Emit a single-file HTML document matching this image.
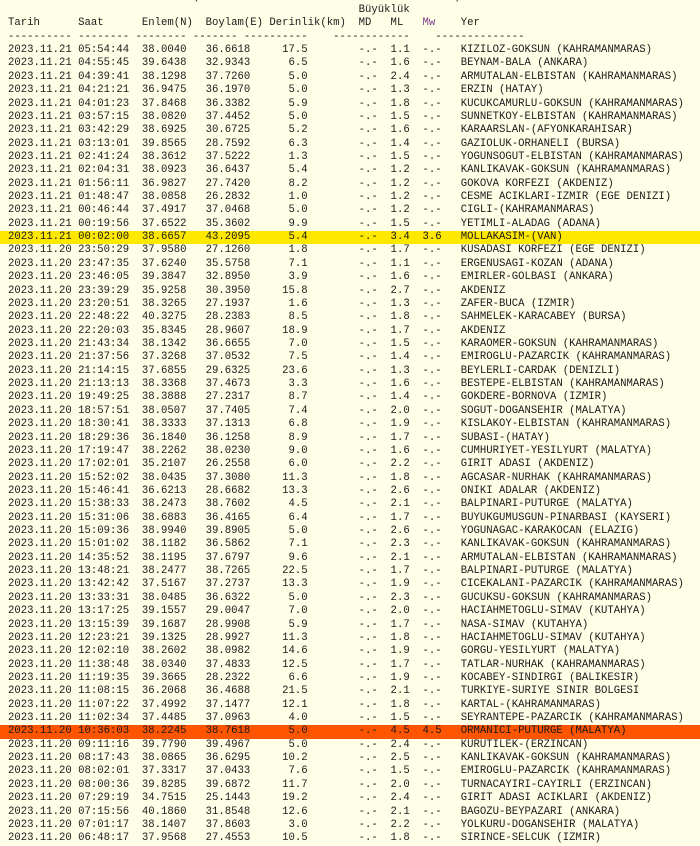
<!DOCTYPE html>
<html><head><meta charset="utf-8"><style>
html,body{margin:0;padding:0;background:#FFFFE8;width:700px;height:843px;overflow:hidden}
.p{position:absolute;left:8px;top:4px;font-family:"Liberation Mono","DejaVu Sans Mono",monospace;font-size:10.63px;line-height:13.36px;color:#1a1a1a;white-space:pre}
.l{height:13.36px;position:relative}
.y{background:#FFE800;margin-left:-8px;padding-left:8px;width:700px}
.o{background:#FF5500;margin-left:-8px;padding-left:8px;width:700px}
.mw{color:#7a3c8c}
.top{position:absolute;left:8px;top:-9px;font-family:"Liberation Mono",monospace;font-size:10.63px;color:#222;white-space:pre}
</style></head><body>
<div class="top">                             (                                        )</div>
<div class="p"><div class="l">                                                       Büyüklük</div><div class="l">Tarih      Saat      Enlem(N)  Boylam(E) Derinlik(km)  MD   ML   <span class="mw">Mw</span>    Yer</div><div class="l">---------- -------- -------- ------- ----------    ------------    --------------</div><div class="l">2023.11.21 05:54:44  38.0040   36.6618     17.5        -.-  1.1  -.-   KIZILOZ-GOKSUN (KAHRAMANMARAS)</div><div class="l">2023.11.21 04:55:45  39.6438   32.9343      6.5        -.-  1.6  -.-   BEYNAM-BALA (ANKARA)</div><div class="l">2023.11.21 04:39:41  38.1298   37.7260      5.0        -.-  2.4  -.-   ARMUTALAN-ELBISTAN (KAHRAMANMARAS)</div><div class="l">2023.11.21 04:21:21  36.9475   36.1970      5.0        -.-  1.3  -.-   ERZIN (HATAY)</div><div class="l">2023.11.21 04:01:23  37.8468   36.3382      5.9        -.-  1.8  -.-   KUCUKCAMURLU-GOKSUN (KAHRAMANMARAS)</div><div class="l">2023.11.21 03:57:15  38.0820   37.4452      5.0        -.-  1.5  -.-   SUNNETKOY-ELBISTAN (KAHRAMANMARAS)</div><div class="l">2023.11.21 03:42:29  38.6925   30.6725      5.2        -.-  1.6  -.-   KARAARSLAN-(AFYONKARAHISAR)</div><div class="l">2023.11.21 03:13:01  39.8565   28.7592      6.3        -.-  1.4  -.-   GAZIOLUK-ORHANELI (BURSA)</div><div class="l">2023.11.21 02:41:24  38.3612   37.5222      1.3        -.-  1.5  -.-   YOGUNSOGUT-ELBISTAN (KAHRAMANMARAS)</div><div class="l">2023.11.21 02:04:31  38.0923   36.6437      5.4        -.-  1.2  -.-   KANLIKAVAK-GOKSUN (KAHRAMANMARAS)</div><div class="l">2023.11.21 01:56:11  36.9827   27.7420      8.2        -.-  1.2  -.-   GOKOVA KORFEZI (AKDENIZ)</div><div class="l">2023.11.21 01:48:47  38.0858   26.2832      1.0        -.-  1.2  -.-   CESME ACIKLARI-IZMIR (EGE DENIZI)</div><div class="l">2023.11.21 00:46:44  37.4917   37.0468      5.0        -.-  1.2  -.-   CIGLI-(KAHRAMANMARAS)</div><div class="l">2023.11.21 00:19:56  37.6522   35.3602      9.9        -.-  1.5  -.-   YETIMLI-ALADAG (ADANA)</div><div class="l y">2023.11.21 00:02:00  38.6657   43.2095      5.4        -.-  3.4  3.6   MOLLAKASIM-(VAN)</div><div class="l">2023.11.20 23:50:29  37.9580   27.1260      1.8        -.-  1.7  -.-   KUSADASI KORFEZI (EGE DENIZI)</div><div class="l">2023.11.20 23:47:35  37.6240   35.5758      7.1        -.-  1.1  -.-   ERGENUSAGI-KOZAN (ADANA)</div><div class="l">2023.11.20 23:46:05  39.3847   32.8950      3.9        -.-  1.6  -.-   EMIRLER-GOLBASI (ANKARA)</div><div class="l">2023.11.20 23:39:29  35.9258   30.3950     15.8        -.-  2.7  -.-   AKDENIZ</div><div class="l">2023.11.20 23:20:51  38.3265   27.1937      1.6        -.-  1.3  -.-   ZAFER-BUCA (IZMIR)</div><div class="l">2023.11.20 22:48:22  40.3275   28.2383      8.5        -.-  1.8  -.-   SAHMELEK-KARACABEY (BURSA)</div><div class="l">2023.11.20 22:20:03  35.8345   28.9607     18.9        -.-  1.7  -.-   AKDENIZ</div><div class="l">2023.11.20 21:43:34  38.1342   36.6655      7.0        -.-  1.5  -.-   KARAOMER-GOKSUN (KAHRAMANMARAS)</div><div class="l">2023.11.20 21:37:56  37.3268   37.0532      7.5        -.-  1.4  -.-   EMIROGLU-PAZARCIK (KAHRAMANMARAS)</div><div class="l">2023.11.20 21:14:15  37.6855   29.6325     23.6        -.-  1.3  -.-   BEYLERLI-CARDAK (DENIZLI)</div><div class="l">2023.11.20 21:13:13  38.3368   37.4673      3.3        -.-  1.6  -.-   BESTEPE-ELBISTAN (KAHRAMANMARAS)</div><div class="l">2023.11.20 19:49:25  38.3888   27.2317      8.7        -.-  1.4  -.-   GOKDERE-BORNOVA (IZMIR)</div><div class="l">2023.11.20 18:57:51  38.0507   37.7405      7.4        -.-  2.0  -.-   SOGUT-DOGANSEHIR (MALATYA)</div><div class="l">2023.11.20 18:30:41  38.3333   37.1313      6.8        -.-  1.9  -.-   KISLAKOY-ELBISTAN (KAHRAMANMARAS)</div><div class="l">2023.11.20 18:29:36  36.1840   36.1258      8.9        -.-  1.7  -.-   SUBASI-(HATAY)</div><div class="l">2023.11.20 17:19:47  38.2262   38.0230      9.0        -.-  1.6  -.-   CUMHURIYET-YESILYURT (MALATYA)</div><div class="l">2023.11.20 17:02:01  35.2107   26.2558      6.0        -.-  2.2  -.-   GIRIT ADASI (AKDENIZ)</div><div class="l">2023.11.20 15:52:02  38.0435   37.3080     11.3        -.-  1.8  -.-   AGCASAR-NURHAK (KAHRAMANMARAS)</div><div class="l">2023.11.20 15:46:41  36.6213   28.6682     13.3        -.-  2.6  -.-   ONIKI ADALAR (AKDENIZ)</div><div class="l">2023.11.20 15:38:33  38.2473   38.7602      4.5        -.-  2.1  -.-   BALPINARI-PUTURGE (MALATYA)</div><div class="l">2023.11.20 15:31:06  38.6883   36.4165      6.4        -.-  1.7  -.-   BUYUKGUMUSGUN-PINARBASI (KAYSERI)</div><div class="l">2023.11.20 15:09:36  38.9940   39.8905      5.0        -.-  2.6  -.-   YOGUNAGAC-KARAKOCAN (ELAZIG)</div><div class="l">2023.11.20 15:01:02  38.1182   36.5862      7.1        -.-  2.3  -.-   KANLIKAVAK-GOKSUN (KAHRAMANMARAS)</div><div class="l">2023.11.20 14:35:52  38.1195   37.6797      9.6        -.-  2.1  -.-   ARMUTALAN-ELBISTAN (KAHRAMANMARAS)</div><div class="l">2023.11.20 13:48:21  38.2477   38.7265     22.5        -.-  1.7  -.-   BALPINARI-PUTURGE (MALATYA)</div><div class="l">2023.11.20 13:42:42  37.5167   37.2737     13.3        -.-  1.9  -.-   CICEKALANI-PAZARCIK (KAHRAMANMARAS)</div><div class="l">2023.11.20 13:33:31  38.0485   36.6322      5.0        -.-  2.3  -.-   GUCUKSU-GOKSUN (KAHRAMANMARAS)</div><div class="l">2023.11.20 13:17:25  39.1557   29.0047      7.0        -.-  2.0  -.-   HACIAHMETOGLU-SIMAV (KUTAHYA)</div><div class="l">2023.11.20 13:15:39  39.1687   28.9908      5.9        -.-  1.7  -.-   NASA-SIMAV (KUTAHYA)</div><div class="l">2023.11.20 12:23:21  39.1325   28.9927     11.3        -.-  1.8  -.-   HACIAHMETOGLU-SIMAV (KUTAHYA)</div><div class="l">2023.11.20 12:02:10  38.2602   38.0982     14.6        -.-  1.9  -.-   GORGU-YESILYURT (MALATYA)</div><div class="l">2023.11.20 11:38:48  38.0340   37.4833     12.5        -.-  1.7  -.-   TATLAR-NURHAK (KAHRAMANMARAS)</div><div class="l">2023.11.20 11:19:35  39.3665   28.2322      6.6        -.-  1.9  -.-   KOCABEY-SINDIRGI (BALIKESIR)</div><div class="l">2023.11.20 11:08:15  36.2068   36.4688     21.5        -.-  2.1  -.-   TURKIYE-SURIYE SINIR BOLGESI</div><div class="l">2023.11.20 11:07:22  37.4992   37.1477     12.1        -.-  1.8  -.-   KARTAL-(KAHRAMANMARAS)</div><div class="l">2023.11.20 11:02:34  37.4485   37.0963      4.0        -.-  1.5  -.-   SEYRANTEPE-PAZARCIK (KAHRAMANMARAS)</div><div class="l o">2023.11.20 10:36:03  38.2245   38.7618      5.0        -.-  4.5  4.5   ORMANICI-PUTURGE (MALATYA)</div><div class="l">2023.11.20 09:11:16  39.7790   39.4967      5.0        -.-  2.4  -.-   KURUTILEK-(ERZINCAN)</div><div class="l">2023.11.20 08:17:43  38.0865   36.6295     10.2        -.-  2.5  -.-   KANLIKAVAK-GOKSUN (KAHRAMANMARAS)</div><div class="l">2023.11.20 08:02:01  37.3317   37.0433      7.6        -.-  1.5  -.-   EMIROGLU-PAZARCIK (KAHRAMANMARAS)</div><div class="l">2023.11.20 08:00:36  39.8285   39.6872     11.7        -.-  2.0  -.-   TURNACAYIRI-CAYIRLI (ERZINCAN)</div><div class="l">2023.11.20 07:29:19  34.7515   25.1443     19.2        -.-  2.4  -.-   GIRIT ADASI ACIKLARI (AKDENIZ)</div><div class="l">2023.11.20 07:15:56  40.1860   31.8548     12.6        -.-  2.1  -.-   BAGOZU-BEYPAZARI (ANKARA)</div><div class="l">2023.11.20 07:01:17  38.1407   37.8603      3.0        -.-  2.2  -.-   YOLKURU-DOGANSEHIR (MALATYA)</div><div class="l">2023.11.20 06:48:17  37.9568   27.4553     10.5        -.-  1.8  -.-   SIRINCE-SELCUK (IZMIR)</div></div>
</body></html>
